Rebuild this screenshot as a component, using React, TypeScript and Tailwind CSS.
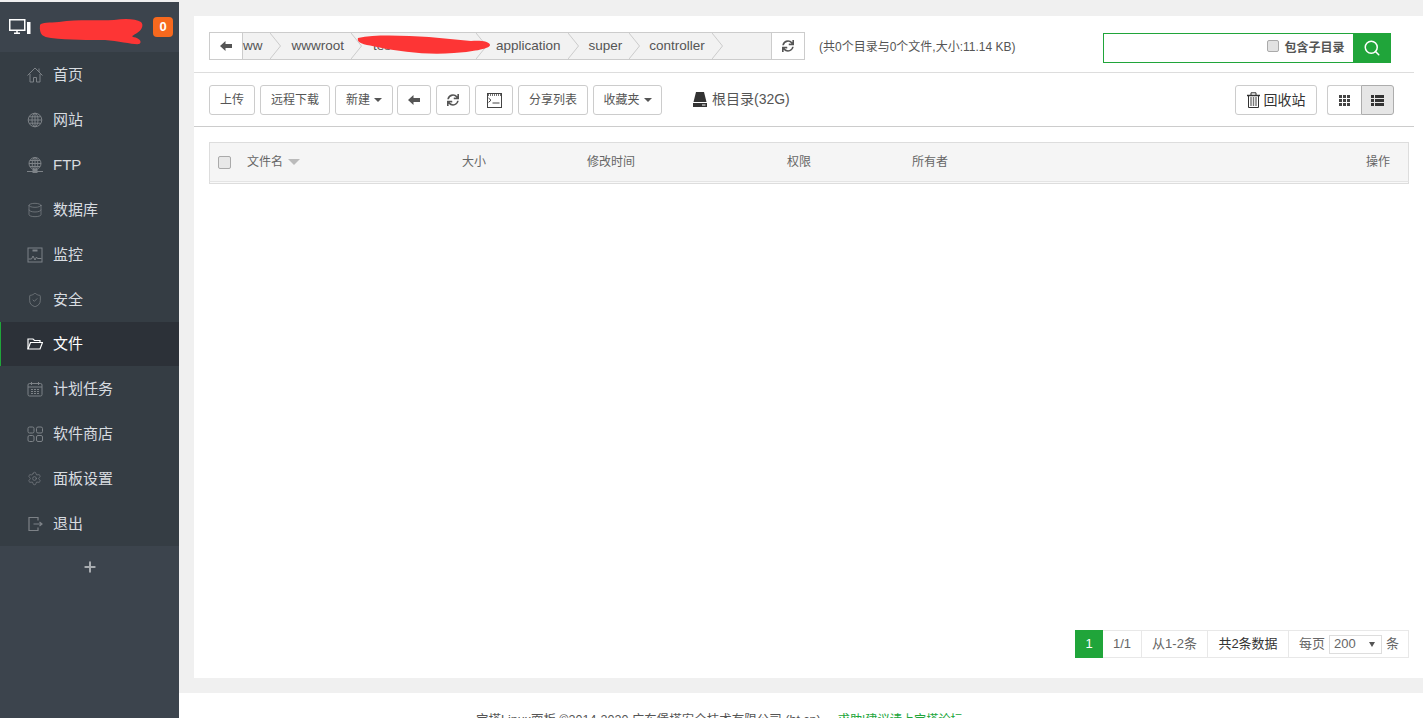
import { Search, ShieldCheck, Database, Settings, Plus } from "lucide-react";
import { FaSync } from "react-icons/fa";
import type { ReactNode } from "react";

const font = "font-['Liberation_Sans','Noto_Sans_CJK_SC',sans-serif]";

function Line({ children, size = 16 }: { children: ReactNode; size?: number }) {
  return (
    <svg width={size} height={size} viewBox="0 0 16 16" fill="none" stroke="currentColor" strokeWidth="1">
      {children}
    </svg>
  );
}

const globeLines = (
  <>
    <circle cx="8" cy="6.5" r="6" />
    <ellipse cx="8" cy="6.5" rx="2.8" ry="6" />
    <path d="M2 6.5h12M3 3.5h10M3 9.5h10M8 .5v12" />
  </>
);

const menu: { label: string; icon: ReactNode; active?: boolean }[] = [
  {
    label: "首页",
    icon: (
      <Line>
        <path d="M.5 8.5L8 1l7.5 7.5M12 1.5v3.5M3 7v8h3.5v-4.5h3V15H13V7" />
      </Line>
    ),
  },
  {
    label: "网站",
    icon: (
      <Line>
        <circle cx="8" cy="8" r="6.8" />
        <ellipse cx="8" cy="8" rx="3" ry="6.8" />
        <path d="M1.2 8h13.6M2.2 4.8h11.6M2.2 11.2h11.6M8 1.2v13.6" />
      </Line>
    ),
  },
  {
    label: "FTP",
    icon: (
      <Line>
        {globeLines}
        <path d="M0 14.5h16" />
        <rect x="6" y="12.5" width="4" height="3" fill="currentColor" />
      </Line>
    ),
  },
  { label: "数据库", icon: <Database size={16} strokeWidth={1.1} /> },
  {
    label: "监控",
    icon: (
      <Line>
        <rect x="1" y="1" width="14" height="14" />
        <rect x="5.5" y="2.5" width="5" height="2" fill="currentColor" stroke="none" />
        <path d="M1.5 12h3l1.5-3 2 4 1.5-3 1 1.5h4" />
      </Line>
    ),
  },
  { label: "安全", icon: <ShieldCheck size={16} strokeWidth={1.1} /> },
  {
    label: "文件",
    icon: (
      <Line>
        <path d="M1 13V3h5l1.5 1.5H13v2" strokeWidth="1.2" />
        <path d="M1 13l2.5-6.5h12L13 13z" strokeWidth="1.2" />
      </Line>
    ),
    active: true,
  },
  {
    label: "计划任务",
    icon: (
      <Line>
        <rect x="1" y="2.5" width="14" height="12.5" rx="1.5" />
        <path d="M1 6h14M4.5 1v3M11.5 1v3" />
        <path d="M4 8.5h8M4 10.5h8M4 12.5h8" strokeWidth="1.2" strokeDasharray="2 1" />
      </Line>
    ),
  },
  {
    label: "软件商店",
    icon: (
      <Line>
        <rect x="1" y="1" width="6" height="6" rx="1.5" />
        <rect x="9.5" y="1" width="6" height="6" rx="1.5" />
        <rect x="1" y="9.5" width="6" height="6" rx="1.5" />
        <rect x="9.5" y="9.5" width="6" height="6" rx="1.5" />
      </Line>
    ),
  },
  { label: "面板设置", icon: <Settings size={15} strokeWidth={1.1} /> },
  {
    label: "退出",
    icon: (
      <Line>
        <path d="M11 4.5V1.5H2v13h9v-3" strokeWidth="1.2" />
        <path d="M6.5 8h8.5M12.5 6l2.5 2-2.5 2" strokeWidth="1.2" />
      </Line>
    ),
  },
];

const crumbs = [
  { text: "ww", pad: "pl-0 pr-[7px]" },
  { text: "wwwroot", pad: "pl-[11px] pr-[7px]" },
  { text: "tes", pad: "pl-[11px] w-[114px]" },
  { text: "application", pad: "pl-[9px] pr-[7px]" },
  { text: "super", pad: "pl-[10px] pr-[7px]" },
  { text: "controller", pad: "pl-[9px] pr-[7px]" },
];

function ArrowIcon() {
  return (
    <svg width="12" height="10" viewBox="0 0 12 10" fill="#555">
      <path d="M0 5l5.5-5v3H12v4H5.5v3z" />
    </svg>
  );
}

function TerminalIcon() {
  return (
    <svg width="15" height="15" viewBox="0 0 15 15" fill="none" stroke="#444">
      <rect x="0.5" y="0.5" width="14" height="14" />
      <path d="M1 2h13" strokeWidth="1.6" strokeDasharray="1 1" />
      <path d="M1.5 5l2.5 2.2-2.5 2.2M5.5 10h7" />
    </svg>
  );
}

function HddIcon() {
  return (
    <svg width="14" height="15" viewBox="0 0 14 15" fill="#333">
      <path d="M3 0h8l2.5 10H.5z" />
      <path d="M0 11h14v4H0z" />
      <path d="M9 12.5h3.5v1H9z" fill="#fff" />
    </svg>
  );
}

function TrashIcon() {
  return (
    <svg width="13" height="16" viewBox="0 0 13 16" fill="none" stroke="#333">
      <path d="M0 3.5h13" strokeWidth="1.5" />
      <path d="M4 3V.8h5V3" />
      <path d="M1.5 4v11.5h10V4" />
      <path d="M4 5v9M6.5 5v9M9 5v9" strokeWidth="1.4" stroke="#777" />
    </svg>
  );
}

function ThIcon() {
  return (
    <svg width="11" height="11" viewBox="0 0 11 11" fill="#444">
      {[0, 4, 8].map((y) =>
        [0, 4, 8].map((x) => <rect key={`${x}-${y}`} x={x} y={y} width="3" height="3" />)
      )}
    </svg>
  );
}

function ThListIcon() {
  return (
    <svg width="13" height="11" viewBox="0 0 13 11" fill="#333">
      {[0, 4, 8].map((y) => (
        <g key={y}>
          <rect x="0" y={y} width="3" height="3" />
          <rect x="4" y={y} width="9" height="3" />
        </g>
      ))}
    </svg>
  );
}

function Btn({ children, className = "" }: { children: ReactNode; className?: string }) {
  return (
    <div className={`h-[30px] pt-px flex items-center justify-center border border-[#ccc] rounded-[3px] bg-white text-[12px] text-[#555] ${className}`}>
      {children}
    </div>
  );
}

function Caret() {
  return <span className="ml-1 border-x-4 border-x-transparent border-t-4 border-t-[#555]" />;
}

function Chevron() {
  return (
    <svg width="11" height="26" viewBox="0 0 11 26" fill="none" stroke="#ccc" className="shrink-0">
      <path d="M0 0l10.5 13L0 26" />
    </svg>
  );
}

export default function App() {
  return (
    <div className={`${font} flex h-[718px] w-[1423px] overflow-hidden bg-[#f0f0f0]`}>
      <aside className="w-[179px] shrink-0 mt-0.5 bg-[#3c444d] flex flex-col">
        <div className="relative h-[50px] shrink-0 flex items-center pl-[9px] pr-[6px] justify-between">
          <svg width="22" height="16" viewBox="0 0 22 16" fill="none">
            <rect x="0.75" y="0.75" width="15" height="10.5" stroke="#fff" strokeWidth="1.5" />
            <path d="M5 14.2h6M8 12v2" stroke="#fff" strokeWidth="1.5" />
            <rect x="18" y="3" width="3.5" height="12" fill="#fff" />
          </svg>
          <span className="w-5 h-5 rounded-[4px] bg-[#f7691e] text-white text-[13px] font-bold flex items-center justify-center">0</span>
          <svg className="absolute left-[39px] top-[15px]" width="108" height="29" viewBox="0 0 108 29">
            <path d="M1 8C3 5 10 6 20 5 40 2 60 4 75 3c12-2 22-1 27 2 3 3 1 8-4 11-3 2-6 3-4 4 8 1 9 6 6 7-4 1-20-3-34-4C50 23 30 23 12 21 4 20 0 18 1 8z" fill="#fd3535" />
          </svg>
        </div>
        <nav className="bg-[#353d44]">
          {menu.map((m) => (
            <div
              key={m.label}
              className={`flex items-center pl-[27px] text-[15px] ${m.active ? "h-[44px] bg-[#2c3138] text-white shadow-[inset_1px_0_0_#20a53a]" : "h-[45px] text-[#d8dce0]"}`}
            >
              <span className={`w-[26px] flex ${m.active ? "text-white" : "text-[#7d8287]"}`}>{m.icon}</span>
              <span className="pt-px">{m.label}</span>
            </div>
          ))}
        </nav>
        <div className="h-[42px] flex items-center justify-center text-[#a8acb0]">
          <Plus size={16} strokeWidth={3} />
        </div>
      </aside>

      <main className="flex-1 flex flex-col min-w-0">
        <div className="mt-[16px] ml-[15px] h-[662px] shrink-0 bg-white flex flex-col">
          <div className="h-[57px] w-[1220px] shrink-0 flex items-start border-b border-[#ddd] pl-[15px] pt-[16px]">
            <div className="relative flex w-[596px] h-[28px] border border-[#ccc] bg-[#f2f2f2] text-[13.5px] text-[#555]">
              <div className="w-[33px] shrink-0 bg-white border-r border-[#ccc] flex items-center justify-center">
                <ArrowIcon />
              </div>
              {crumbs.map((c) => (
                <div key={c.text} className="flex items-center">
                  <span className={c.pad}>{c.text}</span>
                  <Chevron />
                </div>
              ))}
              <div className="ml-auto w-[33px] shrink-0 bg-white border-l border-[#ccc] flex items-center justify-center text-[#555]">
                <FaSync size={12} />
              </div>
              <svg className="absolute left-[147px] top-[2px]" width="134" height="20" viewBox="0 0 134 20">
                <path d="M1 3C20-1 50 1 72 2c14 1 28 3 42 4 8-1 19 0 19 4s-20 7-36 8C70 20 45 17 20 12 10 10-1 9 1 3z" fill="#fd3535" />
              </svg>
            </div>
            <span className="ml-[14px] mt-[6px] text-[12px] text-[#555]">(共0个目录与0个文件,大小:11.14 KB)</span>
            <div className="ml-[87px] mt-px flex w-[288px] h-[30px] border border-[#20a53a]">
              <div className="flex-1 flex items-center justify-end pr-[8px] text-[12px] font-bold text-[#555]">
                <span className="w-[12px] h-[12px] border border-[#aaa] bg-[#e2e2e2] rounded-[2px] mr-[5px] -mt-[5px]" />
                包含子目录
              </div>
              <div className="w-[38px] bg-[#20a53a] flex items-center justify-center -my-px -mr-px">
                <Search size={18} strokeWidth={2} className="text-white" />
              </div>
            </div>
          </div>

          <div className="h-[54px] w-[1220px] shrink-0 flex items-center border-b border-[#ccc] pl-[15px] pr-[20px] gap-[5px]">
            <Btn className="w-[46px]">上传</Btn>
            <Btn className="w-[70px]">远程下载</Btn>
            <Btn className="w-[58px]">新建<Caret /></Btn>
            <Btn className="w-[34px] -ml-px"><ArrowIcon /></Btn>
            <Btn className="w-[34px]"><FaSync size={12} /></Btn>
            <Btn className="w-[38px]"><TerminalIcon /></Btn>
            <Btn className="w-[70px]">分享列表</Btn>
            <Btn className="w-[69px]">收藏夹<Caret /></Btn>
            <div className="ml-[26px] flex items-center text-[14px] text-[#555]">
              <span className="mr-[5px]"><HddIcon /></span>
              根目录(32G)
            </div>
            <Btn className="ml-auto w-[82px] text-[14px]! text-[#333]!">
              <span className="mr-[4px] flex"><TrashIcon /></span>回收站
            </Btn>
            <div className="ml-[5px] flex">
              <Btn className="w-[34px] rounded-r-none border-r-0"><ThIcon /></Btn>
              <Btn className="w-[33px] rounded-l-none bg-[#e6e6e6]! border-[#adadad]!"><ThListIcon /></Btn>
            </div>
          </div>

          <div className="ml-[15px] w-[1200px] mt-[15px] h-[39px] shrink-0 border border-[#ddd] border-b-0 bg-[#f5f5f5] flex items-center text-[12px] text-[#666] relative">
            <span className="absolute left-[8px] w-[13px] h-[13px] border border-[#aaa] bg-[#e8e8e8] rounded-[2px]" />
            <span className="absolute left-[37px] flex items-center">文件名<span className="ml-[5px] border-x-[6px] border-x-transparent border-t-[6px] border-t-[#bbb]" /></span>
            <span className="absolute left-[252px]">大小</span>
            <span className="absolute left-[377px]">修改时间</span>
            <span className="absolute left-[577px]">权限</span>
            <span className="absolute left-[702px]">所有者</span>
            <span className="absolute right-[18px]">操作</span>
          </div>
          <div className="ml-[15px] w-[1200px] h-[3px] shrink-0 border border-[#ddd] border-t-[#e4e4e4] bg-[#f9f9f9]" />

          <div className="flex-1" />

          <div className="flex pl-[881px] pb-[20px] text-[13px] text-[#666]">
            <div className="h-[28px] flex border-y border-r border-[#e8e8e8] items-center">
              <span className="w-[28px] h-[28px] -my-px bg-[#20a53a] text-white flex items-center justify-center">1</span>
              <span className="w-[39px] h-full border-r border-[#e8e8e8] flex items-center justify-center">1/1</span>
              <span className="w-[66px] h-full border-r border-[#e8e8e8] flex items-center justify-center">从1-2条</span>
              <span className="w-[81px] h-full border-r border-[#e8e8e8] flex items-center justify-center text-[#333]">共2条数据</span>
              <span className="w-[119px] h-full flex items-center justify-center pl-px">
                每页
                <span className="mx-[4px] w-[53px] h-[19px] border border-[#ddd] flex items-center justify-between pl-[4px] pr-[6px]">
                  200<span className="border-x-[3px] border-x-transparent border-t-[5px] border-t-[#555]" />
                </span>
                条
              </span>
            </div>
          </div>
        </div>

        <div className="mt-[15px] flex-1 bg-white pl-[297px] text-[12.5px] text-[#555]">
          <div className="pt-[18px] whitespace-nowrap">
            宝塔Linux面板 ©2014-2020 广东堡塔安全技术有限公司 (bt.cn)
            <span className="ml-[17px] text-[12.2px] text-[#20a53a]">求助|建议请上宝塔论坛</span>
          </div>
        </div>
      </main>
    </div>
  );
}
